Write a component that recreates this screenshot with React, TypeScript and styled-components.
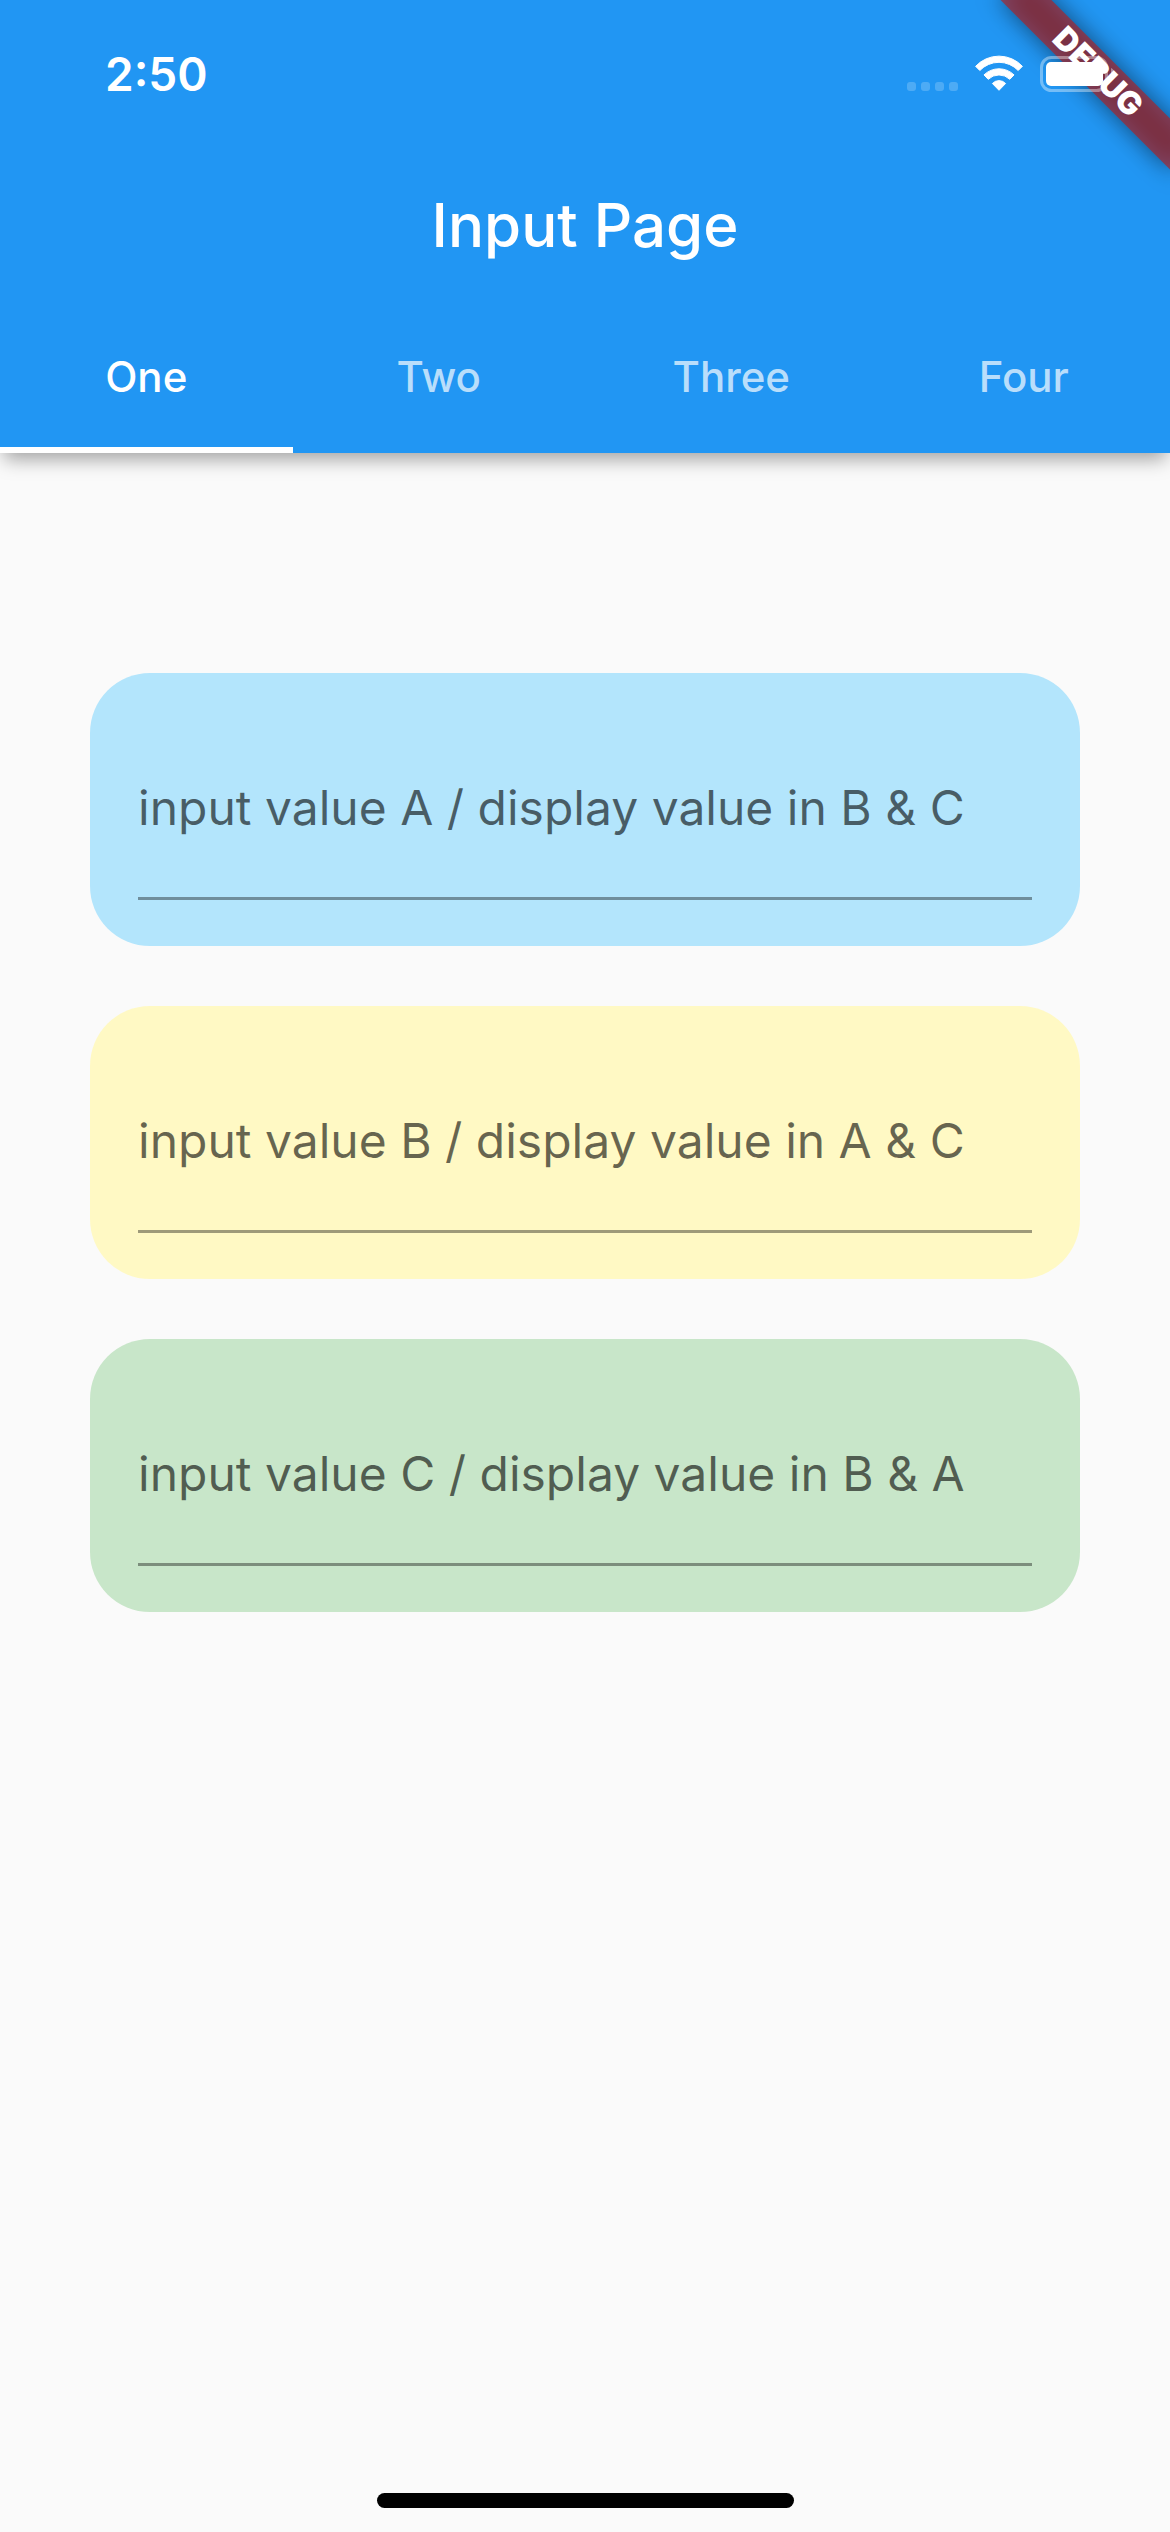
import React, { useState } from "react";
import styled, { createGlobalStyle } from "styled-components";

const GlobalStyle = createGlobalStyle`
  *, *::before, *::after { box-sizing: border-box; }
  body {
    margin: 0;
    background: #fafafa;
    font-family: Inter, "Liberation Sans", sans-serif;
  }
`;

const Page = styled.div`
  display: flex;
  flex-direction: column;
  min-height: 100vh;
`;

const Header = styled.header`
  position: relative;
  background: #2196f3;
  color: #fff;
  box-shadow: 0 10px 18px -4px rgba(0, 0, 0, 0.36);
`;

const StatusBar = styled.div`
  position: relative;
  z-index: 2;
  display: flex;
  align-items: center;
  justify-content: space-between;
  height: 141px;
  padding: 7px 54px 0 105px;
`;

const Clock = styled.time`
  font-size: 46px;
  font-weight: 600;
  line-height: 56px;
`;

const StatusIcons = styled.div`
  display: flex;
  align-items: center;
  gap: 17px;
`;

const CornerClip = styled.div`
  position: absolute;
  top: 0;
  right: 0;
  z-index: 1;
  width: 260px;
  height: 260px;
  overflow: hidden;
  pointer-events: none;
`;

const DebugRibbon = styled.div`
  position: absolute;
  top: 54px;
  right: -48px;
  width: 240px;
  height: 36px;
  transform: rotate(45deg);

  &::before,
  &::after {
    content: "";
    position: absolute;
    inset: 0;
  }
  &::before {
    background: rgba(0, 0, 0, 0.5);
    filter: blur(12px);
  }
  &::after {
    background: rgba(183, 28, 28, 0.63);
  }
`;

const DebugText = styled.span`
  position: relative;
  z-index: 1;
  display: block;
  font-size: 32px;
  font-weight: 900;
  line-height: 36px;
  text-align: center;
`;

const Toolbar = styled.div`
  display: flex;
  align-items: center;
  justify-content: center;
  height: 168px;
`;

const Title = styled.h1`
  margin: 0;
  font-size: 60px;
  font-weight: 500;
  line-height: 72px;
`;

const TabList = styled.div`
  display: grid;
  grid-template-columns: repeat(4, 1fr);
`;

const Tab = styled.button<{ $active: boolean }>`
  height: 144px;
  padding: 0 0 2px;
  border: 0;
  border-bottom: 6px solid ${(p) => (p.$active ? "#fff" : "transparent")};
  background: none;
  color: ${(p) => (p.$active ? "#fff" : "rgba(255, 255, 255, 0.7)")};
  font-family: inherit;
  font-size: 42px;
  font-weight: 500;
  line-height: 48px;
  cursor: pointer;
`;

const Fields = styled.main`
  display: flex;
  flex-direction: column;
  gap: 60px;
  padding: 220px 90px 60px;
`;

const Card = styled.div<{ $color: string }>`
  padding: 47px 48px 46px;
  border-radius: 60px;
  background: ${(p) => p.$color};
`;

const TextField = styled.input`
  display: block;
  width: 100%;
  height: 180px;
  padding: 0 0 2px;
  border: 0;
  border-bottom: 3px solid rgba(0, 0, 0, 0.38);
  border-radius: 0;
  outline: none;
  background: none;
  color: rgba(0, 0, 0, 0.87);
  font-family: inherit;
  font-size: 48px;
  line-height: 56px;

  &::placeholder {
    color: rgba(0, 0, 0, 0.6);
    opacity: 1;
  }
`;

const HomeIndicator = styled.div`
  width: 417px;
  height: 15px;
  margin: auto auto 24px;
  border-radius: 8px;
  background: #000;
`;

const WifiDrawing = styled.svg`
  overflow: visible;
`;

function SignalIcon() {
  return (
    <svg width="51" height="36" viewBox="0 0 51 36" fill="#fff" fillOpacity="0.2" aria-hidden="true">
      {[0, 14, 28, 42].map((x) => (
        <rect key={x} x={x} y="26" width="9" height="9" rx="3" />
      ))}
    </svg>
  );
}

function WifiIcon() {
  return (
    <WifiDrawing width="48" height="36" viewBox="0 1.5 48 36" fill="#fff" stroke="#fff" strokeWidth="1" strokeLinejoin="round" aria-hidden="true">
      <path d="M.6 11.8A32 32 0 0 1 47.4 11.8L43.2 16A26.6 26.6 0 0 0 4.8 16Z" />
      <path d="M9 20.4A21.5 21.5 0 0 1 39 20.4L34.8 24.8A15.6 15.6 0 0 0 13.2 24.8Z" />
      <path d="M17.4 29A9 9 0 0 1 30.6 29L24 35.8Z" />
    </WifiDrawing>
  );
}

function BatteryIcon() {
  return (
    <svg width="76" height="36" viewBox="0 0 76 36" fill="#fff" aria-hidden="true">
      <rect x="1.5" y="1.5" width="65" height="33" rx="10" fill="none" stroke="#fff" strokeWidth="3" strokeOpacity="0.38" />
      <rect x="6" y="6" width="57" height="24" rx="5" />
      <path d="M71 12C76 14 76 22 71 24Z" fillOpacity="0.42" />
    </svg>
  );
}

const tabs = ["One", "Two", "Three", "Four"];

const fields = [
  { id: "a", color: "#b3e5fc", hint: "input value A / display value in B & C" },
  { id: "b", color: "#fff9c4", hint: "input value B / display value in A & C" },
  { id: "c", color: "#c8e6c9", hint: "input value C / display value in B & A" },
];

export default function App() {
  const [active, setActive] = useState("One");
  const [value, setValue] = useState("");

  return (
    <Page>
      <GlobalStyle />
      <Header>
        <StatusBar>
          <Clock>2:50</Clock>
          <StatusIcons>
            <SignalIcon />
            <WifiIcon />
            <BatteryIcon />
          </StatusIcons>
        </StatusBar>
        <CornerClip>
          <DebugRibbon>
            <DebugText>DEBUG</DebugText>
          </DebugRibbon>
        </CornerClip>
        <Toolbar>
          <Title>Input Page</Title>
        </Toolbar>
        <TabList role="tablist">
          {tabs.map((name) => (
            <Tab
              key={name}
              type="button"
              role="tab"
              aria-selected={name === active}
              $active={name === active}
              onClick={() => setActive(name)}
            >
              {name}
            </Tab>
          ))}
        </TabList>
      </Header>
      <Fields>
        {fields.map((field) => (
          <Card key={field.id} $color={field.color}>
            <TextField
              id={field.id}
              type="text"
              aria-label={field.hint}
              placeholder={field.hint}
              value={value}
              onChange={(event) => setValue(event.target.value)}
            />
          </Card>
        ))}
      </Fields>
      <HomeIndicator />
    </Page>
  );
}
